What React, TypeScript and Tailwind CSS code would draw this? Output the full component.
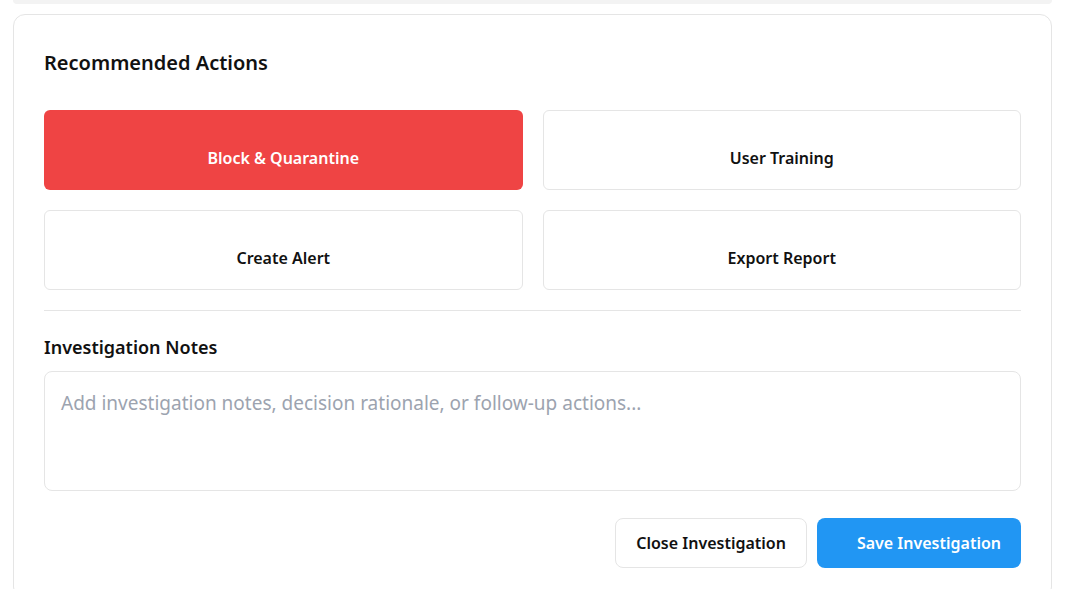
const actions = [
  { label: 'Block & Quarantine', primary: true },
  { label: 'User Training', primary: false },
  { label: 'Create Alert', primary: false },
  { label: 'Export Report', primary: false },
];

export default function App() {
  return (
    <div className="min-h-screen bg-white pl-[13px] pr-[27px] text-[#111] font-['Noto_Sans',sans-serif]">
      {/* bottom edge of the previous panel */}
      <div className="h-[4px] rounded-b-xl bg-[#f3f3f3]" />

      <div className="mt-[10px] rounded-xl border border-[#e5e5e5] bg-white p-[30px]">
        <h2 className="mt-1 mb-[33px] text-xl font-semibold leading-7">Recommended Actions</h2>

        <div className="grid grid-cols-2 gap-5">
          {actions.map((a) => (
            <button
              key={a.label}
              className={
                a.primary
                  ? 'flex h-20 flex-col items-center justify-center rounded-md bg-[#ef4444] text-white'
                  : 'flex h-20 flex-col items-center justify-center rounded-md border border-[#e5e5e5] bg-white text-[#111]'
              }
            >
              <span className="h-4" />
              <span className="text-base font-semibold leading-6">{a.label}</span>
            </button>
          ))}
        </div>

        <div className="mt-5 border-t border-[#e5e5e5] pt-[24px]">
          <label className="block text-lg font-semibold leading-6">Investigation Notes</label>
          <textarea
            className="mt-[12px] block h-[120px] w-full resize-none rounded-lg border border-[#e5e5e5] px-4 py-[19px] text-[19px] leading-6 outline-none placeholder:text-[#9ca3af]"
            placeholder="Add investigation notes, decision rationale, or follow-up actions..."
          />
        </div>

        <div className="mt-[27px] flex justify-end gap-[10px]">
          <button className="h-[50px] rounded-lg border border-[#e5e5e5] bg-white px-5 text-base font-semibold">
            Close Investigation
          </button>
          <button className="flex h-[50px] items-center gap-1 rounded-lg bg-[#2196f3] px-5 text-base font-semibold text-white">
            <span className="w-4" />
            Save Investigation
          </button>
        </div>
      </div>
    </div>
  );
}
